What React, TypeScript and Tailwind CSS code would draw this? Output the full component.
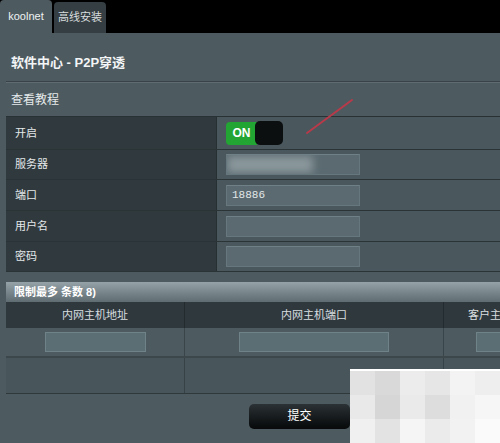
import React from 'react';

const font = { fontFamily: '"Liberation Sans", "Noto Sans CJK SC", sans-serif' };

const rows = [
  { label: '开启', h: 'h-[33px]', kind: 'toggle' },
  { label: '服务器', h: 'h-[30px]', kind: 'blur' },
  { label: '端口', h: 'h-[31px]', kind: 'port' },
  { label: '用户名', h: 'h-[31px]', kind: 'input' },
  { label: '密码', h: 'h-[30px]', kind: 'input' },
];

// grey levels of the pixelated watermark block
const pixels = [
  'bg-[#e2e2e2]', 'bg-[#d9d9d9]', 'bg-[#ececec]', 'bg-[#e6e6e6]', 'bg-[#f3f3f3]', 'bg-[#eeeeee]',
  'bg-[#e9e9e9]', 'bg-[#d6d6d6]', 'bg-[#eaeaea]', 'bg-[#dddddd]', 'bg-[#f1f1f1]', 'bg-[#f6f6f6]',
  'bg-[#f0f0f0]', 'bg-[#e3e3e3]', 'bg-[#f5f5f5]', 'bg-[#ebebeb]', 'bg-[#f2f2f2]', 'bg-[#fafafa]',
];

const Field = ({ children }: { children?: React.ReactNode }) => (
  <div className="relative w-[134px] h-[21px] bg-[#5a6a70] border border-[#66777d] border-t-[#6f8086] overflow-hidden flex items-center">
    {children}
  </div>
);

const App = () => {
  return (
    <div className="relative w-[500px] h-[443px] overflow-hidden bg-[#4d5a5f] text-white" style={font}>
      {/* tabs */}
      <div className="h-[33px] bg-black flex items-end">
        <div className="w-[52px] h-[33px] bg-[#4d5a5f] rounded-t-[4px] flex items-center justify-center text-[11px] text-[#eef2f3]">
          koolnet
        </div>
        <div className="ml-[2px] w-[52px] h-[31px] bg-[#353e42] rounded-t-[4px] flex items-center justify-center text-[11px] text-[#d8dddf]">
          高线安装
        </div>
      </div>

      <div className="pl-[6px]">
        <div className="h-[49px] pt-[22px] pl-[5px] border-b border-[#394246]">
          <div className="text-[13px] leading-[16px] font-bold text-[#f3f5f6]">软件中心 - P2P穿透</div>
        </div>
        <div className="h-[34px] border-t border-[#5f6b70] pl-[5px] flex items-center text-[12px] text-[#e6eaeb]">
          查看教程
        </div>

        {/* settings table */}
        <div className="border-t border-[#283134]">
          {rows.map((r) => (
            <div key={r.label} className={`flex ${r.h} border-b border-[#2a3336]`}>
              <div className="w-[211px] bg-[#303a3e] border-r border-[#263033] pl-[9px] flex items-center text-[11px] text-[#e4e8ea]">
                {r.label}
              </div>
              <div className="flex-1 bg-[#4a575c] pl-[9px] flex items-center">
                {r.kind === 'toggle' && (
                  <div className="flex items-center h-[24px]">
                    <div className="w-[31px] h-[23px] bg-[#23a534] rounded-l-[4px] flex items-center justify-center text-[12px] font-bold text-white">
                      ON
                    </div>
                    <div className="w-[28px] h-[24px] bg-[#0c0f10] rounded-[5px] -ml-[2px]" />
                  </div>
                )}
                {r.kind === 'blur' && (
                  <Field>
                    <div className="absolute left-0 top-[1px] w-[86px] h-[17px] bg-[#8a979b] blur-[4px]" />
                  </Field>
                )}
                {r.kind === 'port' && (
                  <Field>
                    <span className="pl-[5px] text-[11px] text-[#e3e7e8]" style={{ fontFamily: '"Liberation Mono", monospace' }}>
                      18886
                    </span>
                  </Field>
                )}
                {r.kind === 'input' && <Field />}
              </div>
            </div>
          ))}
        </div>

        {/* limit table */}
        <div className="mt-[10px] w-[600px]">
          <div className="h-[20px] bg-gradient-to-b from-[#95a2a7] to-[#5f6c71] pl-[8px] flex items-center text-[11px] font-bold text-white">
            限制最多 条数 8)
          </div>
          <div className="flex h-[26px] bg-[#2f393d] text-[11px] text-[#d9dee0]">
            <div className="w-[179px] border-r border-[#232b2e] flex items-center justify-center">内网主机地址</div>
            <div className="w-[259px] border-r border-[#232b2e] flex items-center justify-center">内网主机端口</div>
            <div className="w-[114px] flex items-center justify-center">客户主机端口</div>
          </div>
          <div className="flex h-[30px] bg-[#4d5b60] border-b-[2px] border-[#3b474b]">
            <div className="w-[179px] border-r border-[#3a4549] flex items-center justify-center">
              <div className="w-[101px] h-[20px] bg-[#5b6e74] border border-[#6f8288]" />
            </div>
            <div className="w-[259px] border-r border-[#3a4549] flex items-center justify-center">
              <div className="w-[150px] h-[20px] bg-[#5b6e74] border border-[#6f8288]" />
            </div>
            <div className="w-[114px] flex items-center justify-center">
              <div className="w-[50px] h-[20px] bg-[#5b6e74] border border-[#6f8288]" />
            </div>
          </div>
          <div className="flex h-[36px] bg-[#48555a] border-b border-[#2f393c]">
            <div className="w-[179px] border-r border-[#364246]" />
            <div className="w-[259px] border-r border-[#364246]" />
            <div className="w-[114px]" />
          </div>
        </div>

        <div className="pt-[9px] pl-[243px]">
          <button className="w-[101px] h-[25px] rounded-[5px] bg-gradient-to-b from-[#2b3235] to-[#07090a] text-[12px] text-white">
            提交
          </button>
        </div>
      </div>

      {/* annotation arrow */}
      <svg className="absolute left-[300px] top-[95px]" width="60" height="45" viewBox="0 0 60 45">
        <line x1="7" y1="38" x2="52" y2="5" stroke="#b83a4a" strokeWidth="2" strokeLinecap="round" />
      </svg>

      {/* pixelated watermark */}
      <div className="absolute left-[350px] top-[369px] w-[150px] h-[74px] bg-[#ececec] border-t-[2px] border-white grid grid-cols-6 grid-rows-3">
        {pixels.map((c, i) => (
          <div key={i} className={c} />
        ))}
      </div>
    </div>
  );
};

export default App;
